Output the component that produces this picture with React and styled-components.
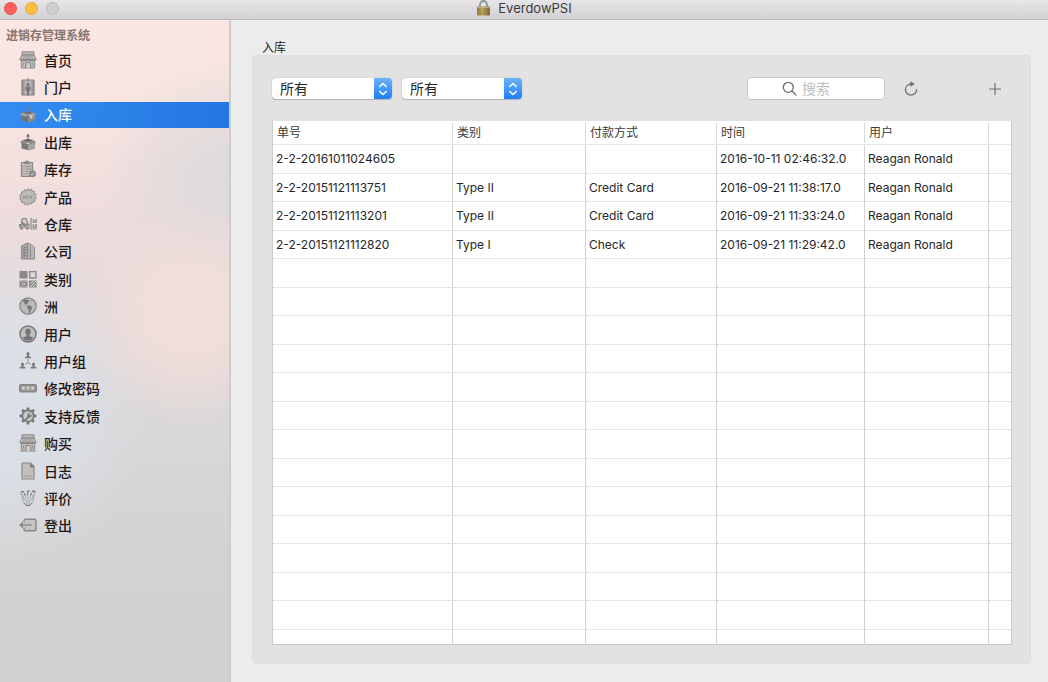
import React from "react";
import styled, { createGlobalStyle } from "styled-components";

const GlobalStyle = createGlobalStyle`
  *, *::before, *::after { box-sizing: border-box; }
  body {
    margin: 0;
    background: #ececec;
    color: #262626;
    font-family: Inter, "Noto Sans CJK SC", sans-serif;
    font-size: 12px;
  }
  button, input, select { font: inherit; color: inherit; }
`;

const Window = styled.div`
  display: flex;
  flex-direction: column;
  min-height: 100vh;
`;

const TitleBar = styled.header`
  display: grid;
  grid-template-columns: 1fr auto 1fr;
  align-items: center;
  height: 20px;
  padding: 0 4px 3px;
  background: linear-gradient(#e8e6e8, #d2d0d2);
  border-bottom: 1px solid #bab8ba;
`;

const Lights = styled.div`
  display: flex;
  gap: 8px;
`;

const Light = styled.button`
  width: 13px;
  height: 13px;
  padding: 0;
  border: 1px solid ${(p) => p.$edge};
  border-radius: 50%;
  background: ${(p) => p.$fill};
`;

const Title = styled.h1`
  display: flex;
  align-items: center;
  gap: 7px;
  margin: 0;
  font-size: 13px;
  font-weight: 400;
  line-height: 16px;
  color: #3c3c3c;
`;

const Body = styled.div`
  display: flex;
  flex: 1;
`;

const Sidebar = styled.nav`
  width: 231px;
  flex: none;
  border-right: 2px solid #cccccc;
  background:
    radial-gradient(ellipse 110px 110px at 190px 295px, #f4dfd9 0%, #f4dfd9aa 45%, #f4dfd900 100%),
    radial-gradient(ellipse 150px 170px at 0px 385px, #dbe1e9 0%, #dbe1e9bb 45%, #dbe1e900 100%),
    radial-gradient(ellipse 130px 120px at 229px 160px, #dddadb 0%, #dddadb99 50%, #dddadb00 100%),
    linear-gradient(#fae6e2 0, #f8e4e1 90px, #efdddd 190px, #e3dadb 300px, #d8d7d8 430px, #d3d2d2 540px, #d2d1d1 100%);
`;

const SidebarHeading = styled.h2`
  margin: 0;
  padding: 5px 6px 0;
  font-size: 12px;
  font-weight: 700;
  line-height: 22px;
  color: #86736f;
`;

const NavList = styled.ul`
  display: flex;
  flex-direction: column;
  justify-content: space-between;
  height: 492px;
  margin: 0;
  padding: 0;
  list-style: none;
`;

const NavLink = styled.a`
  display: flex;
  align-items: center;
  gap: 7px;
  height: 26px;
  padding: 0 0 1px 19px;
  font-size: 14px;
  font-weight: 500;
  text-decoration: none;
  color: ${(p) => (p.$active ? "#ffffff" : "#1c1717")};
  background: ${(p) => (p.$active ? "linear-gradient(100deg, #358df1, #2277e0)" : "none")};
`;

const Glyph = styled.svg`
  width: 18px;
  height: 18px;
  flex: none;
  overflow: visible;
`;

const Main = styled.main`
  flex: 1;
  min-width: 0;
  padding: 21px 17px 19px 21px;
`;

const Group = styled.section`
  display: flex;
  flex-direction: column;
`;

const GroupTitle = styled.h2`
  margin: 0;
  padding: 0 10px;
  font-size: 12px;
  font-weight: 400;
  line-height: 14px;
`;

const Panel = styled.div`
  padding: 21px 18px 18px 19px;
  border: 1px solid #dedede;
  border-radius: 5px;
  background: #e2e2e2;
`;

const Toolbar = styled.div`
  display: flex;
  align-items: center;
  gap: 10px;
  height: 23px;
  margin-bottom: 21px;
  padding-right: 1px;
`;

const Picker = styled.label`
  position: relative;
  display: block;
  width: 120px;
  height: 21px;
`;

const PickerSelect = styled.select`
  width: 100%;
  height: 100%;
  padding: 0 24px 0 8px;
  appearance: none;
  border: 0;
  border-radius: 4px;
  background: #ffffff;
  box-shadow: 0 0 1px #00000055, 0 1px 1px #00000030;
  font-size: 14px;
`;

const PickerCap = styled.span`
  position: absolute;
  top: 0;
  right: 0;
  bottom: 0;
  display: flex;
  align-items: center;
  justify-content: center;
  width: 18px;
  border-radius: 0 4px 4px 0;
  background: linear-gradient(#6cb3fa, #1f7ff8);
  pointer-events: none;
`;

const SearchField = styled.label`
  display: flex;
  align-items: center;
  gap: 5px;
  width: 138px;
  height: 23px;
  margin-left: auto;
  padding-left: 34px;
  border: 1px solid #c6c6c6;
  border-radius: 4px;
  background: #ffffff;
`;

const SearchInput = styled.input`
  flex: 1;
  min-width: 0;
  padding: 0;
  border: 0;
  outline: 0;
  background: none;
  font-size: 14px;
  &::placeholder { color: #bdbdbd; opacity: 1; }
`;

const ToolButton = styled.button`
  display: flex;
  align-items: center;
  justify-content: center;
  width: 32px;
  height: 23px;
  padding: 0;
  border: 0;
  background: none;
`;

const ToolGroup = styled.div`
  display: flex;
  gap: 52px;
`;

const DataTable = styled.table`
  width: 100%;
  table-layout: fixed;
  border-collapse: separate;
  border-spacing: 0;
  background: #ffffff;
  border-left: 1px solid #cccccc;
  border-right: 1px solid #cccccc;
  border-bottom: 1px solid #c4c4c4;
`;

const HeadCell = styled.th`
  height: 24px;
  padding: 0 4px;
  border-bottom: 1px solid #e6e6e6;
  background: linear-gradient(#d8d8d8, #d8d8d8) right center / 1px 20px no-repeat;
  font-size: 12px;
  font-weight: 400;
  line-height: 16px;
  text-align: left;
  color: #3a3a3a;
  &:last-child { background: none; }
`;

const Row = styled.tr`
  height: 29px;
  &:nth-child(even) { height: 28px; }
  &:last-child { height: 14px; }
`;

const Cell = styled.td`
  padding: 0 3px;
  border-right: 1px solid #d2d2d2;
  border-bottom: 1px dotted #cdcdcd;
  line-height: 14px;
  white-space: nowrap;
  &:last-child { border-right: 0; }
  ${Row}:last-child & { border-bottom: 0; }
`;

const dark = "#8a8988";
const light = "#bdbab8";

const Shop = () => (
  <>
    <path d="M3 .8h12v3.200H3z" fill={light} stroke={dark} />
    <path d="M3 4h12l2.300 4.500H.7z" fill={light} stroke={dark} />
    <path d="M5.500 4.500l-1 3.500M9 4.500v3.500M12.500 4.500l1 3.500M7.200 4.500l-.4 3.500M10.800 4.500l.4 3.500" stroke={dark} strokeWidth=".7" />
    <path d="M2.300 9v8h13.400V9" fill={light} stroke={dark} />
    <path d="M1.500 8.500h15v1.500h-15z" fill={dark} />
    <path d="M7 17v-5.500h4.500V17" fill="#d0cdcb" stroke={dark} />
    <path d="M4.500 11.500v3M13.700 11.500v3" stroke={dark} strokeWidth=".8" />
  </>
);

const Portal = () => (
  <>
    <path d="M3 2h12v15H3z" fill={light} stroke={dark} />
    <path d="M2.500 2h3v15.500h-3zM12.500 2h3v15.500h-3z" fill={dark} opacity=".7" />
    <path d="M9 0v4" stroke={dark} strokeWidth="1.300" />
    <circle cx="9" cy="6.500" r="1.600" fill="#777" />
    <path d="M6.500 8.500h5v4h-1.300v5H7.800v-5H6.500z" fill="#777" />
  </>
);

const BoxIn = () => (
  <>
    <path d="M8.300 1h1.400v3h1.500L9 6.500 6.800 4h1.500z" fill="#7e8286" />
    <path d="M3 7.500l6-1 6 1-6 2.500z" fill="#6e747b" />
    <path d="M2 10l7 1v6.500l-7-2.200z" fill="#6f757c" />
    <path d="M16 10l-7 1v6.500l7-2.200z" fill="#8f8b88" />
    <path d="M3 7.500L.8 10l5.700 1.800L9 9.500zM15 7.500l2.200 2.500-5.700 1.800L9 9.500z" fill="#a7a19c" />
    <path d="M9.200 9.500l3.300 4.800 1.700-3.600z" fill="#cfcac6" />
  </>
);

const BoxOut = () => (
  <>
    <path d="M8.400 7V3.500H7L9 .5l2 3H9.600V7z" fill="#6f6e6d" />
    <path d="M2.500 9.500L9 11v6l-6.500-1.600z" fill="#777675" />
    <path d="M15.500 9.500L9 11v6l6.500-1.600z" fill="#aba8a6" stroke={dark} strokeWidth=".7" />
    <path d="M3.500 7l5.500-1 5.500 1L9 9.500z" fill="#686766" />
    <path d="M3.500 7L.8 9.500l5.700 2L9 9zM14.500 7l2.700 2.500-5.700 2L9 9z" fill="#8e8c8a" />
  </>
);

const Clipboard = () => (
  <>
    <path d="M2.500 2.500h11v14h-11z" fill={light} stroke={dark} strokeWidth="1.200" />
    <path d="M5 1.500h1.500L8 0l1.500 1.500H11V4H5z" fill={dark} />
    <path d="M4.500 6.500h1M7 6.500h5M4.500 9h1M7 9h5M4.500 11.500h1M7 11.500h3M4.500 14h1M7 14h2" stroke={dark} strokeWidth=".8" />
    <circle cx="13.500" cy="13.800" r="3.500" fill={dark} />
    <path d="M11.800 13.800l1.200 1.300 2.200-2.500" fill="none" stroke="#e0dddb" />
  </>
);

const Badge = () => (
  <>
    <path d="M9 .6l1.500 1.500 2-.9.9 2 2.100.2-.1 2.200 1.900 1-1 1.900 1.100 1.900-1.800 1.200.1 2.200-2.200.3-.8 2-2.100-.7L9 17.400l-1.600-1.500-2.100.7-.8-2-2.200-.3.1-2.200-1.800-1.200 1.100-1.900-1-1.900 1.900-1-.1-2.200 2.100-.2.9-2 2 .9z" fill={light} stroke={dark} strokeWidth=".9" />
    <circle cx="9" cy="9" r="5.800" fill="none" stroke="#adabaa" strokeWidth=".6" />
    <path d="M4.500 10.500v-3l1.600 3v-3M9 7.500H7.300v3H9M7.300 9h1.500M10 7.500l.7 3 .8-2.500.8 2.500.8-3" fill="none" stroke={dark} strokeWidth=".6" />
  </>
);

const Forklift = () => (
  <>
    <path d="M2 5l1.500-2h4l2 5.500 1 1V13H0V9h2z" fill={dark} />
    <path d="M3.500 5.500L4.300 4.200h2.400l1.500 4.300H6L3.500 7z" fill="#d6d1cf" />
    <circle cx="2.700" cy="13" r="2" fill={dark} stroke="#d9d3d1" strokeWidth=".8" />
    <circle cx="8.300" cy="13" r="2" fill={dark} stroke="#d9d3d1" strokeWidth=".8" />
    <path d="M12 3v11h6" fill="none" stroke={dark} strokeWidth="1.200" />
    <path d="M13.500 4H18v4h-4.500zM13.500 9H18v4h-4.500z" fill="#a09e9d" />
    <path d="M15.200 4h1v1.500h-1zM15.200 9h1v1.500h-1z" fill="#dedad8" />
  </>
);

const Building = () => (
  <>
    <path d="M2.500 4L8.500 1v16h-6z" fill="#a9a7a6" stroke={dark} />
    <path d="M8.500 1l3.500 1.500 3.500 3V17h-7z" fill={light} stroke={dark} />
    <path d="M4 6.500l3-1.300M4 9l3-1M4 11.500l3-.7M4 14l3-.4" stroke="#777675" strokeWidth="1.200" />
    <path d="M11.500 2.500V17" stroke={dark} strokeWidth=".8" />
    <path d="M13 8v7M10 5v10" stroke="#a5a3a2" strokeWidth=".8" />
  </>
);

const Categories = () => (
  <>
    <path d="M.5 1h8v7.500h-8z" fill={dark} />
    <path d="M10.700 1.700h6.300V8h-6.300z" fill="#dcdad8" stroke={dark} strokeWidth="1.300" />
    <path d="M.5 10.500h8v7h-8zM10 10.500h7.700v7H10z" fill={dark} />
    <path d="M1.500 12l1-1M6.500 17l1-1M1.500 16l1 1M6.500 11l1 1M3 14l1.500-1.500L6 14l-1.500 1.500z" stroke="#dcdad8" strokeWidth=".9" fill="none" />
    <path d="M11 14l3-3M11 17l6-6M14 17l3-3" stroke="#dcdad8" strokeWidth="1" />
  </>
);

const Globe = () => (
  <>
    <circle cx="9" cy="9" r="8.200" fill="#bcbbbb" stroke={dark} strokeWidth="1.300" />
    <path d="M3.500 3.600l3-1.400 2.500.6 1.600 1.400-1.700.9L8.500 7 7 6.800l1 1.800-1.600-.7-1.500-2.600z" fill="#777" />
    <path d="M8.500 8.500l2.200-.2 2.600 1.900-.8 2.100-1.700 3.600-1-.4-.1-3-1.600-1.900z" fill="#777" />
    <path d="M12.500 2.700l1.500 1.200-.8.6-1.300-1z" fill="#898989" />
  </>
);

const User = () => (
  <>
    <circle cx="9" cy="9" r="8" fill="#c1c0c0" stroke="#777" strokeWidth="1.500" />
    <ellipse cx="9" cy="6.800" rx="2.800" ry="3.400" fill="#777" />
    <path d="M7.500 9h3v2l4 1.700A7 7 0 019 16a7 7 0 01-5.500-3.300l4-1.700z" fill="#777" />
  </>
);

const Person = ({ x, y }) => (
  <g transform={`translate(${x} ${y})`}>
    <ellipse cx="0" cy="0" rx="1.500" ry="1.900" fill="#7b7b7b" />
    <path d="M-.7 1h1.400v1l2.200 .9v1.400h-5.800V2.900l2.200-.9z" fill="#7b7b7b" />
  </g>
);

const UserGroup = () => (
  <>
    <Person x={9} y={2} />
    <Person x={3.500} y={12.300} />
    <Person x={14.500} y={12.300} />
    <path d="M9 7v3.500L6 12.500M9 10.500l3 2" fill="none" stroke="#8b8b8b" strokeWidth=".9" />
  </>
);

const Password = () => (
  <>
    <rect x="0" y="5" width="18" height="8.500" rx="2" fill="#858585" />
    <rect x="1.500" y="6.500" width="15" height="5.500" rx="1" fill="#9c9c9c" />
    <path d="M4.500 7.300v3.400M3 8.200l3 1.700M6 8.200L3 9.900M9 7.300v3.400M7.500 8.200l3 1.700M10.500 8.200l-3 1.700M13.500 7.300v3.400M12 8.200l3 1.700M15 8.200l-3 1.700" stroke="#dcdcdc" strokeWidth=".8" />
  </>
);

const Support = () => (
  <>
    <path d="M7.800 .5h2.400l.5 2.200 1.300.6 2-1.300 1.800 1.800-1.300 2 .6 1.300 2.200.6v2.500l-2.200.5-.6 1.300 1.300 2-1.800 1.800-2-1.300-1.300.6-.5 2.300H7.800l-.5-2.300-1.300-.6-2 1.300L2.200 14l1.300-2-.6-1.300-2.300-.5V7.700l2.300-.6.6-1.300-1.300-2L4 2l2 1.300 1.300-.6z" fill="#797979" />
    <circle cx="9" cy="9" r="4.800" fill="#c8c9ca" />
    <path d="M5.500 12.800l3-3.300a2.700 2.700 0 013.200-3.700L10 7.300l.7 1 2-.8a2.700 2.700 0 01-3 3.200l-3 3z" fill="#797979" />
  </>
);

const Log = () => (
  <>
    <path d="M3 1h8.500L15 4.500V17H3z" fill="#c1bfbe" stroke={dark} strokeWidth="1.200" strokeLinejoin="round" />
    <path d="M11 1v4.500h4z" fill="#7b7a79" />
    <path d="M5.500 14h1.500M8 14h1.500M10.500 14h2" stroke={dark} />
  </>
);

const Review = () => (
  <>
    <path d="M1 3.500L3 1.800l2 .4-.7 1.300M7.500 2.500l2-1.300 1.500.8-1.500 1.500M12.500 2l2.500-.7 2 1.500-2.500 1" fill="#777" />
    <path d="M1 4.500l2 1.200 1 7 3.200 4h3.600l3.200-4 1-7 2-1.500" fill="none" stroke="#959595" strokeWidth=".8" />
    <path d="M3.500 5l2 6.500M6 4.500l1 6 .6 5M9 4.500v12M12 4.500l-1 6-.6 5M14.500 5l-2 6.500" stroke="#aaa9a8" strokeWidth=".9" fill="none" />
    <path d="M4.800 3.500l1.300 3.200M8.800 3l-.5 3M13 3.500L11.500 6.500M5 14l2.500 2.500h3L13 14" stroke="#777" strokeWidth="1" fill="none" />
  </>
);

const Logout = () => (
  <>
    <path d="M5 6.500V5A1.800 1.800 0 016.800 3.200h8.400A1.800 1.800 0 0117 5v8a1.800 1.800 0 01-1.800 1.800H6.800A1.800 1.800 0 015 13v-1.500" fill="#c6c4c3" stroke={dark} strokeWidth="1.400" />
    <path d="M12.500 9H2" stroke={dark} strokeWidth="1.400" />
    <path d="M0 9l4-3.500v7z" fill={dark} />
  </>
);

const navItems = [
  ["首页", Shop],
  ["门户", Portal],
  ["入库", BoxIn],
  ["出库", BoxOut],
  ["库存", Clipboard],
  ["产品", Badge],
  ["仓库", Forklift],
  ["公司", Building],
  ["类别", Categories],
  ["洲", Globe],
  ["用户", User],
  ["用户组", UserGroup],
  ["修改密码", Password],
  ["支持反馈", Support],
  ["购买", Shop],
  ["日志", Log],
  ["评价", Review],
  ["登出", Logout],
];

const columns = [
  { label: "单号", width: 180 },
  { label: "类别", width: 133 },
  { label: "付款方式", width: 131 },
  { label: "时间", width: 148 },
  { label: "用户", width: 124 },
  { label: "" },
];

const orders = [
  ["2-2-20161011024605", "", "", "2016-10-11 02:46:32.0", "Reagan Ronald", ""],
  ["2-2-20151121113751", "Type II", "Credit Card", "2016-09-21 11:38:17.0", "Reagan Ronald", ""],
  ["2-2-20151121113201", "Type II", "Credit Card", "2016-09-21 11:33:24.0", "Reagan Ronald", ""],
  ["2-2-20151121112820", "Type I", "Check", "2016-09-21 11:29:42.0", "Reagan Ronald", ""],
];

const emptyRow = columns.map(() => "");
const rows = [...orders, ...Array.from({ length: 14 }, () => emptyRow)];

const LockIcon = () => (
  <svg width="15" height="16" viewBox="0 0 15 16" aria-hidden="true">
    <defs>
      <linearGradient id="brass" x1="0" x2="1">
        <stop offset="0" stopColor="#8d7a3c" />
        <stop offset=".4" stopColor="#b6a25c" />
        <stop offset="1" stopColor="#7c6a2e" />
      </linearGradient>
    </defs>
    <path d="M4 8V4.500a3.500 3.500 0 017 0V8" fill="none" stroke="#8b979b" strokeWidth="1.800" />
    <rect x="1" y="6.500" width="13" height="9" rx="1" fill="url(#brass)" />
    <path d="M2 7.500h11" stroke="#cdbd80" strokeWidth=".8" />
  </svg>
);

const FilterSelect = ({ label }) => (
  <Picker>
    <PickerSelect aria-label={label}>
      <option>所有</option>
    </PickerSelect>
    <PickerCap>
      <svg width="10" height="14" viewBox="0 0 10 14" fill="none" stroke="#fff" strokeWidth="1.500" strokeLinecap="round" strokeLinejoin="round">
        <path d="M1.800 4.500L5 1.500l3.200 3M1.800 9.500l3.200 3 3.200-3" />
      </svg>
    </PickerCap>
  </Picker>
);

export default function App() {
  return (
    <Window>
      <GlobalStyle />
      <TitleBar>
        <Lights>
          <Light aria-label="关闭" $fill="#fc5f5c" $edge="#e9504e" />
          <Light aria-label="最小化" $fill="#fdbe41" $edge="#e5a93b" />
          <Light aria-label="缩放" $fill="#d0ced0" $edge="#bcbabc" />
        </Lights>
        <Title>
          <LockIcon />
          EverdowPSI
        </Title>
      </TitleBar>
      <Body>
        <Sidebar>
          <SidebarHeading>进销存管理系统</SidebarHeading>
          <NavList>
            {navItems.map(([label, Icon]) => (
              <li key={label}>
                <NavLink href="#" $active={label === "入库"} aria-current={label === "入库" ? "page" : undefined}>
                  <Glyph viewBox="0 0 18 18" fill="none" aria-hidden="true">
                    <Icon />
                  </Glyph>
                  {label}
                </NavLink>
              </li>
            ))}
          </NavList>
        </Sidebar>
        <Main>
          <Group>
            <GroupTitle>入库</GroupTitle>
            <Panel>
              <Toolbar>
                <FilterSelect label="类别" />
                <FilterSelect label="付款方式" />
                <SearchField>
                  <svg width="15" height="15" viewBox="0 0 15 15" fill="none" stroke="#6a6a6a" strokeWidth="1.300" strokeLinecap="round" aria-hidden="true">
                    <circle cx="6.300" cy="6.300" r="5" />
                    <path d="M10 10l4 4" />
                  </svg>
                  <SearchInput type="search" aria-label="搜索" placeholder="搜索" />
                </SearchField>
                <ToolGroup>
                  <ToolButton aria-label="刷新">
                    <svg width="14" height="16" viewBox="0 0 14 16" aria-hidden="true">
                      <path d="M7 3a5.600 5.600 0 105.600 5.600" fill="none" stroke="#707070" strokeWidth="1.300" strokeLinecap="round" />
                      <path d="M6.300 .3l4.700 2.700-4.700 2.700z" fill="#707070" />
                    </svg>
                  </ToolButton>
                  <ToolButton aria-label="添加">
                    <svg width="12" height="12" viewBox="0 0 12 12" stroke="#707070" strokeWidth="1.200" aria-hidden="true">
                      <path d="M6 0v12M0 6h12" />
                    </svg>
                  </ToolButton>
                </ToolGroup>
              </Toolbar>
              <DataTable>
                <colgroup>
                  {columns.map((c, i) => (
                    <col key={i} width={c.width} />
                  ))}
                </colgroup>
                <thead>
                  <tr>
                    {columns.map((c, i) => (
                      <HeadCell key={i} scope="col">{c.label}</HeadCell>
                    ))}
                  </tr>
                </thead>
                <tbody>
                  {rows.map((row, r) => (
                    <Row key={r}>
                      {row.map((value, c) => (
                        <Cell key={c}>{value}</Cell>
                      ))}
                    </Row>
                  ))}
                </tbody>
              </DataTable>
            </Panel>
          </Group>
        </Main>
      </Body>
    </Window>
  );
}
